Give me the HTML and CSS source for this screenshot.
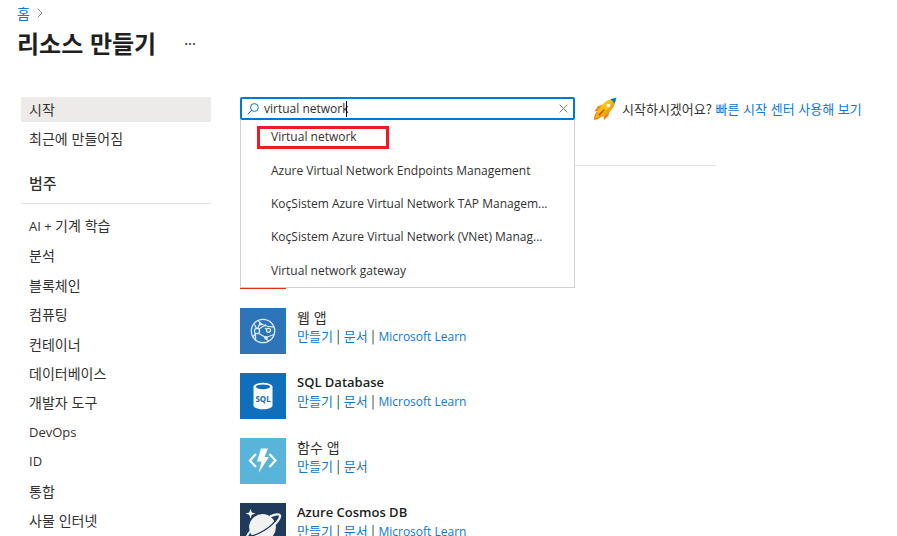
FILE: index.html
```html
<!DOCTYPE html>
<html lang="ko">
<head>
<meta charset="utf-8">
<meta name="viewport" content="width=device-width, initial-scale=1">
<title>리소스 만들기</title>
<link rel="stylesheet" href="styles.css">
</head>
<body>
<div class="page">
  <header class="header">
    <nav class="breadcrumb">
      <a href="#">홈</a>
      <svg class="chevron" viewBox="0 0 6 10" aria-hidden="true"><path d="M.7.7 5 5 .7 9.3"/></svg>
    </nav>
    <div class="title-row">
      <h1>리소스 만들기</h1>
      <button class="more" type="button">···</button>
    </div>
  </header>
  <div class="columns">
    <aside class="sidebar">
      <ul class="views">
        <li><a class="selected" href="#">시작</a></li>
        <li><a href="#">최근에 만들어짐</a></li>
      </ul>
      <h2>범주</h2>
      <ul class="categories">
        <li><a href="#"><span class="latin">AI + </span>기계 학습</a></li>
        <li><a href="#">분석</a></li>
        <li><a href="#">블록체인</a></li>
        <li><a href="#">컴퓨팅</a></li>
        <li><a href="#">컨테이너</a></li>
        <li><a href="#">데이터베이스</a></li>
        <li><a href="#">개발자 도구</a></li>
        <li><a class="latin" href="#">DevOps</a></li>
        <li><a class="latin" href="#">ID</a></li>
        <li><a href="#">통합</a></li>
        <li><a href="#">사물 인터넷</a></li>
      </ul>
    </aside>
    <main class="main">
      <div class="toolbar">
        <div class="search">
          <label for="search"><svg class="magnifier" viewBox="0 0 12 12" role="img" aria-label="virtual network"><circle cx="7.4" cy="4.5" r="3.9"/><path d="M4.700 7.300.7 11.300"/></svg></label>
          <input id="search" type="text" value="virtual network" autocomplete="off">
          <span class="caret"></span>
          <button class="clear" type="button"><svg viewBox="0 0 9 9" aria-hidden="true"><path d="m.7.7 7.6 7.6M8.3.7.7 8.3"/></svg></button>
          <ul class="suggestions">
            <li class="marked">Virtual network</li>
            <li>Azure Virtual Network Endpoints Management</li>
            <li>KoçSistem Azure Virtual Network TAP Managem...</li>
            <li>KoçSistem Azure Virtual Network (VNet) Manag...</li>
            <li>Virtual network gateway</li>
          </ul>
        </div>
        <div class="quickstart">
          <svg class="rocket" viewBox="0 0 24 24" aria-hidden="true">
            <path fill="#f58220" d="M11 7.5 5.2 9 1.2 14.4l4.6-.6zM17 13.2l-1.6 5.6-4.6 4.4.3-5.2z"/>
            <path fill="#f58220" d="M4.3 14.2C1.8 16.6 1.2 19 .8 23c3.4-.4 6.4-1.4 8.6-4.2z"/>
            <path fill="#ffb900" d="M4.6 15.4c-1.4 1.8-1.8 3.4-2.2 5.6 2.2-.3 4-1 5.4-2.6z"/>
            <path fill="#fcc10f" d="M18.2 2 22 5.8c-1.6 5.6-5.8 10.2-12.6 14L4.4 14.8C8 8 12.4 3.6 18.2 2z"/>
            <path fill="#f3a313" d="M22 5.8c-1.6 5.6-5.8 10.2-12.6 14l-2.2-2.2C13.6 14 17.8 9.6 20.2 4z"/>
            <path fill="#0078d4" d="M17.4 2.2 23.6.4l-1.8 6.2z"/>
            <circle cx="15.4" cy="8.6" r="1.9" fill="#fff"/>
            <path stroke="#a64b00" stroke-width="1.2" stroke-linecap="round" d="m6 18 5-5"/>
          </svg>
          <p>시작하시겠어요? <a href="#">빠른 시작 센터 사용해 보기</a></p>
        </div>
      </div>
      <div class="rule"></div>
      <ul class="products">
        <li><span class="tile red"></span></li>
        <li>
          <span class="tile web"><svg viewBox="0 0 46 46" aria-hidden="true"><g fill="none" stroke="#dcebfa" stroke-width="1.3"><circle cx="23" cy="23" r="11.7"/><path d="M18 12.5C21 17 27 19 34 19M20 15.5l-3 6M17 24.5 25 29M19 21l7-4.5M14.5 16.5l2.5 5M13 29c1-2 2-3 3.5-4.5M15.5 25v8M26 29.5l8-3M29.5 23.5 25 20M26 31l3 2"/></g><g fill="#2e74b9" stroke="#dcebfa" stroke-width="1.3"><circle cx="17" cy="23" r="2.6"/><circle cx="28.5" cy="22.3" r="2"/></g><g fill="#dcebfa"><circle cx="26" cy="29.8" r="1.9"/><circle cx="20.5" cy="16" r="1.5"/></g></svg></span>
          <div><h3>웹 앱</h3><p><a href="#">만들기</a> | <a href="#">문서</a> | <a class="latin" href="#">Microsoft Learn</a></p></div>
        </li>
        <li>
          <span class="tile sql"><svg viewBox="0 0 46 46" aria-hidden="true"><path fill="#fff" d="M13.5 14v18.5c0 2 4 3.8 9.500 3.800s9.500-1.800 9.500-3.800V14z"/><ellipse cx="23" cy="13.8" rx="9.5" ry="4" fill="#fff"/><ellipse cx="23" cy="13.8" rx="7" ry="2.4" fill="#0f6cbd"/><text x="23" y="28.5" text-anchor="middle">SQL</text></svg></span>
          <div><h3 class="latin">SQL Database</h3><p><a href="#">만들기</a> | <a href="#">문서</a> | <a class="latin" href="#">Microsoft Learn</a></p></div>
        </li>
        <li>
          <span class="tile function"><svg viewBox="0 0 46 46" aria-hidden="true"><path fill="none" stroke="#fff" stroke-width="2.2" d="m16 16-6 6.5 6 6.5M29.5 16l6 6.5-6 6.5"/><path fill="#fff" d="M21 10.500h7l-3.500 8.500H29L18.500 35l3-11.500H17z"/></svg></span>
          <div><h3>함수 앱</h3><p><a href="#">만들기</a> | <a href="#">문서</a></p></div>
        </li>
        <li>
          <span class="tile cosmos"><svg viewBox="0 0 46 46" aria-hidden="true"><circle cx="22.5" cy="24.5" r="13.4" fill="#f2f2f2"/><path fill="none" stroke="#1f3a5a" stroke-width="1.6" d="M8 33.500c8 0 24-8.500 29-18.500"/><path fill="none" stroke="#f2f2f2" stroke-width="2.2" d="M30 13.500c5-2.300 9.500-2.800 10-1.200 1 3-6 11.500-14.500 16.500s-17.500 8-18.500 5.500c-.6-1.300 1.200-3.600 4-6.500"/><path fill="#fff" d="m10.500 6 1.300 3.400 3.700 1.100-3.700 1.300-1.300 3.700-1.300-3.700-3.700-1.300 3.700-1.100z"/></svg></span>
          <div><h3 class="latin">Azure Cosmos DB</h3><p><a href="#">만들기</a> | <a href="#">문서</a> | <a class="latin" href="#">Microsoft Learn</a></p></div>
        </li>
      </ul>
    </main>
  </div>
</div>
</body>
</html>
```
FILE: styles.css
```css
*, *::before { box-sizing: border-box; }

body {
  margin: 0;
  background: #fff;
  color: #323130;
  font-family: "Noto Sans CJK KR", sans-serif;
  font-size: 14px;
  line-height: 20px;
}

.page { height: 100vh; overflow: hidden; }

h1, h2, h3, p, ul { margin: 0; padding: 0; }
ul { list-style: none; }
a { color: #0f78d4; text-decoration: none; }
button { border: 0; padding: 0; background: none; color: inherit; font: inherit; }

.latin, .search input, .suggestions {
  font-family: "Open Sans", "Noto Sans CJK KR", sans-serif;
  font-size: 12px;
}

.header { padding: 3px 17px 0; }
.breadcrumb { display: flex; align-items: center; gap: 7px; }
.chevron { width: 6px; height: 10px; fill: none; stroke: #8a8886; }

.title-row { display: flex; align-items: center; gap: 28px; height: 40px; }
h1 { color: #201f1e; font-size: 24px; font-weight: 700; line-height: 32px; }
.more { font-size: 14px; line-height: 20px; }

.columns { display: flex; gap: 29px; padding: 34px 20px 0 21px; }

.sidebar { flex: 0 0 190px; }
.sidebar a { display: block; padding: 0 8px; color: #323130; }
.sidebar .latin { font-size: 13px; white-space: pre; }
.views { display: grid; gap: 4px; }
.views a { line-height: 25px; }
.views .selected { background: #edebe9; }

h2 {
  margin-top: 20px;
  padding: 0 8px 8px;
  border-bottom: 1px solid #e1dfdd;
  font-size: 15px;
  font-weight: 500;
  line-height: 24px;
}

.categories {
  display: grid;
  grid-auto-rows: 1fr;
  align-items: center;
  height: 324px;
  margin-top: 7px;
}

.main { flex: 1; min-width: 0; }
.toolbar { display: flex; align-items: flex-start; gap: 18px; }

.search {
  position: relative;
  display: flex;
  align-items: center;
  flex: 0 1 335px;
  height: 23px;
  padding: 0 5px;
  border: 2px solid #0078d4;
  border-radius: 2px;
}
.search label { display: flex; }
.magnifier { width: 12px; height: 12px; fill: none; stroke: #0078d4; }
.search input {
  flex: 1;
  min-width: 0;
  height: 19px;
  padding: 0 5px;
  border: 0;
  outline: 0;
  color: #323130;
}
.caret { position: absolute; left: 104px; top: 2px; width: 1px; height: 16px; background: #000; }
.clear { display: flex; }
.clear svg { width: 9px; height: 9px; fill: none; stroke: #797775; }

.suggestions {
  position: absolute;
  z-index: 1;
  top: 21px;
  left: -2px;
  right: -2px;
  display: grid;
  grid-auto-rows: 1fr;
  height: 168px;
  border: 1px solid #d2d0ce;
  border-top: 0;
  background: #fff;
}
.suggestions li {
  position: relative;
  display: flex;
  align-items: center;
  padding: 1px 0 0 30px;
  white-space: nowrap;
}
.marked::before {
  content: "";
  position: absolute;
  left: 16px;
  top: 6px;
  width: 132px;
  height: 23px;
  border: 3px solid #ed1c24;
}

.quickstart { display: flex; align-items: center; gap: 5px; height: 24px; white-space: nowrap; }
.rocket { width: 24px; height: 24px; fill: none; }
.quickstart p { font-size: 13px; }

.rule { width: 476px; max-width: 100%; margin-top: 44px; border-top: 1px solid #dfe2ea; }

.products { display: grid; gap: 19px; margin-top: 77px; }
.products li { display: flex; gap: 11px; }
.tile { flex: 0 0 46px; height: 46px; }
.tile svg { display: block; }
.tile text { fill: #0f6cbd; font: 700 8px "Noto Sans", sans-serif; }
.red { background: #e02f12; }
.web { background: #2e74b9; }
.sql { background: #0f6fba; }
.function { background: #59b4d9; }
.cosmos { background: #1f3a5a; }
h3 { font-size: 14px; font-weight: 400; line-height: 18px; }
h3.latin { color: #201f1e; font-size: 13px; font-weight: 600; }
.products p { height: 20px; font-size: 13px; line-height: 20px; white-space: nowrap; }
```
